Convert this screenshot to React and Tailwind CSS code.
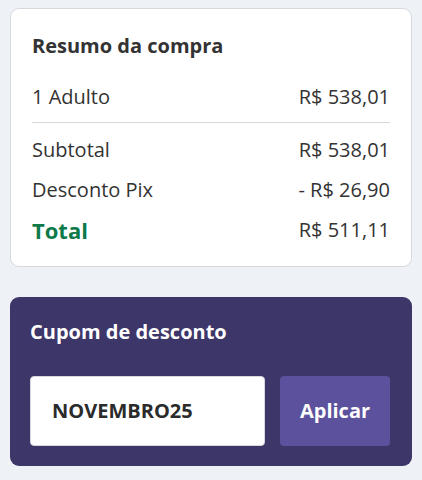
import React from 'react';

const rows = [
  { label: 'Subtotal', value: 'R$ 538,01' },
  { label: 'Desconto Pix', value: '- R$ 26,90' },
];

const App = () => {
  return (
    <div
      className="min-h-[480px] bg-[#eef1f5] px-[10px] pt-[8px]"
      style={{ fontFamily: '"Open Sans", sans-serif' }}
    >
      {/* Resumo */}
      <div className="bg-white border border-[#d5d9de] rounded-[9px] px-[21px] pt-[23px] pb-[23px] text-[#333]">
        <h2 className="text-[20px] font-bold leading-[28px]">Resumo da compra</h2>
        <div className="flex justify-between items-center mt-[24px] text-[20px] leading-[26px]">
          <span>1 Adulto</span>
          <span>R$ 538,01</span>
        </div>
        <div className="h-px bg-[#d5d9de] mt-[12px]"></div>
        <div className="mt-[14px] space-y-[14px]">
          {rows.map((row) => (
            <div key={row.label} className="flex justify-between items-center text-[20px] leading-[26px]">
              <span>{row.label}</span>
              <span>{row.value}</span>
            </div>
          ))}
          <div className="flex justify-between items-center leading-[26px]">
            <span className="text-[22px] font-bold text-[#0e7a4a]">Total</span>
            <span className="text-[20px]">R$ 511,11</span>
          </div>
        </div>
      </div>

      {/* Cupom */}
      <div className="mt-[30px] bg-[#3d3669] rounded-[9px] px-[20px] pt-[22px] pb-[20px]">
        <h3 className="text-[20px] font-bold text-white leading-[26px]">Cupom de desconto</h3>
        <div className="flex gap-[15px] mt-[31px]">
          <div className="w-[235px] h-[70px] bg-white border border-[#d5d9de] rounded-[4px] flex items-center pl-[21px]">
            <span className="text-[20px] font-bold text-[#2b2b2b]">NOVEMBRO25</span>
          </div>
          <button className="w-[110px] h-[70px] bg-[#5b519c] rounded-[4px] text-white text-[20px] font-bold">
            Aplicar
          </button>
        </div>
      </div>
    </div>
  );
};

export default App;
